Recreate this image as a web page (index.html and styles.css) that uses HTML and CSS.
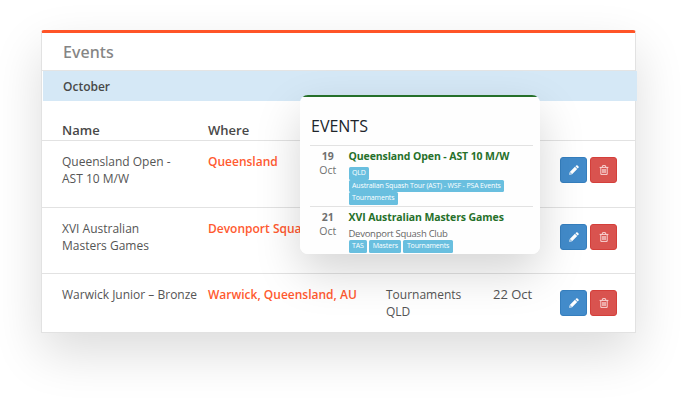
FILE: index.html
```html
<!DOCTYPE html>
<html lang="en">
<head>
<meta charset="utf-8">
<title>Events</title>
<link rel="stylesheet" href="styles.css">
</head>
<body>
<svg class="sprite" aria-hidden="true">
  <symbol id="pencil" viewBox="0 0 10 10"><path fill="#fff" d="M7.2.5Q7.9-.2 8.6.5L9.5 1.4Q10.1 2.1 9.5 2.8L8.7 3.6 6.4 1.3ZM5.9 1.8 8.2 4.1 3.1 9.2.2 9.8.8 6.9ZM1.5 7.2 1.2 8.4 1.7 8.8 2.8 8.5Z"/></symbol>
  <symbol id="trash" viewBox="0 0 10 10"><path fill="none" stroke="#fbe3e2" stroke-width=".9" d="M.6 2.4H9.4M3.2 2.2 3.6.6H6.4L6.8 2.2M1.8 2.5V9.4H8.2V2.5M3.8 4V8M5 4V8M6.2 4V8"/></symbol>
</svg>
<main class="stage">
  <section class="card">
    <h1 class="title">Events</h1>
    <div class="month">October</div>
    <div class="row head"><span>Name</span><span>Where</span></div>
    <div class="row first">
      <span class="name">Queensland Open -<br>AST 10 M/W</span><a class="where">Queensland</a><span></span><span></span>
      <div class="actions"><button class="btn edit"><svg><use href="#pencil"/></svg></button><button class="btn del"><svg><use href="#trash"/></svg></button></div>
    </div>
    <div class="row second">
      <span class="name">XVI Australian<br>Masters Games</span><a class="where">Devonport Squash</a><span></span><span></span>
      <div class="actions"><button class="btn edit"><svg><use href="#pencil"/></svg></button><button class="btn del"><svg><use href="#trash"/></svg></button></div>
    </div>
    <div class="row third">
      <span class="name">Warwick Junior – Bronze</span><a class="where">Warwick, Queensland, AU</a><span class="kind">Tournaments<br>QLD</span><span class="date">22 Oct</span>
      <div class="actions"><button class="btn edit"><svg><use href="#pencil"/></svg></button><button class="btn del"><svg><use href="#trash"/></svg></button></div>
    </div>
  </section>
  <aside class="popup">
    <h2 class="heading">EVENTS</h2>
    <div class="event one">
      <div class="day"><b>19</b><span>Oct</span></div>
      <div class="info"><h3>Queensland Open - AST 10 M/W</h3>
        <div class="stack"><span class="tag">QLD</span><span class="tag">Australian Squash Tour (AST) - WSF - PSA Events</span><span class="tag">Tournaments</span></div></div>
    </div>
    <div class="event two">
      <div class="day"><b>21</b><span>Oct</span></div>
      <div class="info"><h3>XVI Australian Masters Games</h3><p>Devonport Squash Club</p>
        <div class="inline"><span class="tag">TAS</span><span class="tag">Masters</span><span class="tag">Tournaments</span></div></div>
    </div>
  </aside>
</main>
</body>
</html>
```

FILE: styles.css
```css
* { box-sizing: border-box; }
body { margin: 0; background: #fff; font-family: "Open Sans", "Noto Sans", sans-serif; color: #555; overflow: hidden; }
h1, h2, h3, p { margin: 0; }
.sprite { position: absolute; width: 0; height: 0; }
.stage { position: relative; width: 686px; height: 403px; padding: 30px 0 0 41px; overflow: hidden; }
.card { width: 595px; height: 303px; background: #fff; border: 1px solid #e2e2e2; border-top: 3px solid #ff5427; border-radius: 3px 3px 0 0; box-shadow: 0 20px 50px rgba(0, 0, 0, .14); }
.title { height: 38px; padding-left: 21px; border-bottom: 1px solid #e4e4e4; font: 500 16px/38px "Noto Sans", sans-serif; letter-spacing: .05px; color: #858585; }
.month { width: 594px; height: 30px; margin-left: 1px; padding-left: 20px; background: #d5e8f6; font-size: 12px; line-height: 31px; font-weight: 600; color: #484848; }
.row { display: grid; grid-template-columns: 146px 178px 107px 67px 57px; padding-left: 20px; font-size: 12px; line-height: 17px; border-bottom: 1px solid #e2e2e2; white-space: nowrap; }
.head { height: 40px; padding-top: 21px; font-weight: 600; font-size: 13px; color: #484848; }
.first { height: 67px; padding-top: 12px; }
.second { height: 66px; padding-top: 12px; }
.third { height: 58px; padding-top: 12px; border-bottom: 0; }
.where { font-weight: 600; color: #ff5a30; }
.date { font-size: 13px; }
.actions { display: flex; gap: 3px; padding-top: 4px; }
.btn { display: flex; align-items: center; justify-content: center; width: 27px; height: 26px; padding: 0; border-radius: 3px; }
.btn svg { width: 10px; height: 10px; }
.edit { background: #428bca; border: 1px solid #357ebd; }
.del { background: #d9534f; border: 1px solid #d43f3a; }
.popup { position: absolute; left: 300px; top: 95px; width: 240px; height: 159px; padding: 2px 7px 0 10px; background: linear-gradient(#26702a 2px, #fefefe 2px); border-radius: 8px; box-shadow: 0 18px 45px rgba(0, 0, 0, .17); }
.heading { height: 48px; padding: 17px 0 0 1px; font-size: 16px; line-height: 24px; font-weight: 400; color: #20252b; }
.event { display: flex; border-top: 1px solid #e2e2e2; }
.one { height: 61px; }
.day { width: 38.5px; padding: 3px 3px 0 0; font-size: 10.5px; line-height: 14px; text-align: center; color: #707070; }
.day b, .day span { display: block; }
.info { white-space: nowrap; }
.info h3 { height: 21px; font-size: 10.5px; line-height: 21px; font-weight: 700; letter-spacing: -.1px; color: #26702a; }
.info p { height: 13px; margin-top: -1px; font-size: 9.5px; line-height: 13px; letter-spacing: -.27px; color: #666; }
.stack { display: flex; flex-direction: column; align-items: flex-start; }
.inline { display: flex; gap: 2px; }
.tag { height: 12.5px; padding: 0 3.5px; border-radius: 1.5px; background: #69bfdf; color: #fff; font-size: 7px; line-height: 12px; font-weight: 500; letter-spacing: -.14px; }
```
